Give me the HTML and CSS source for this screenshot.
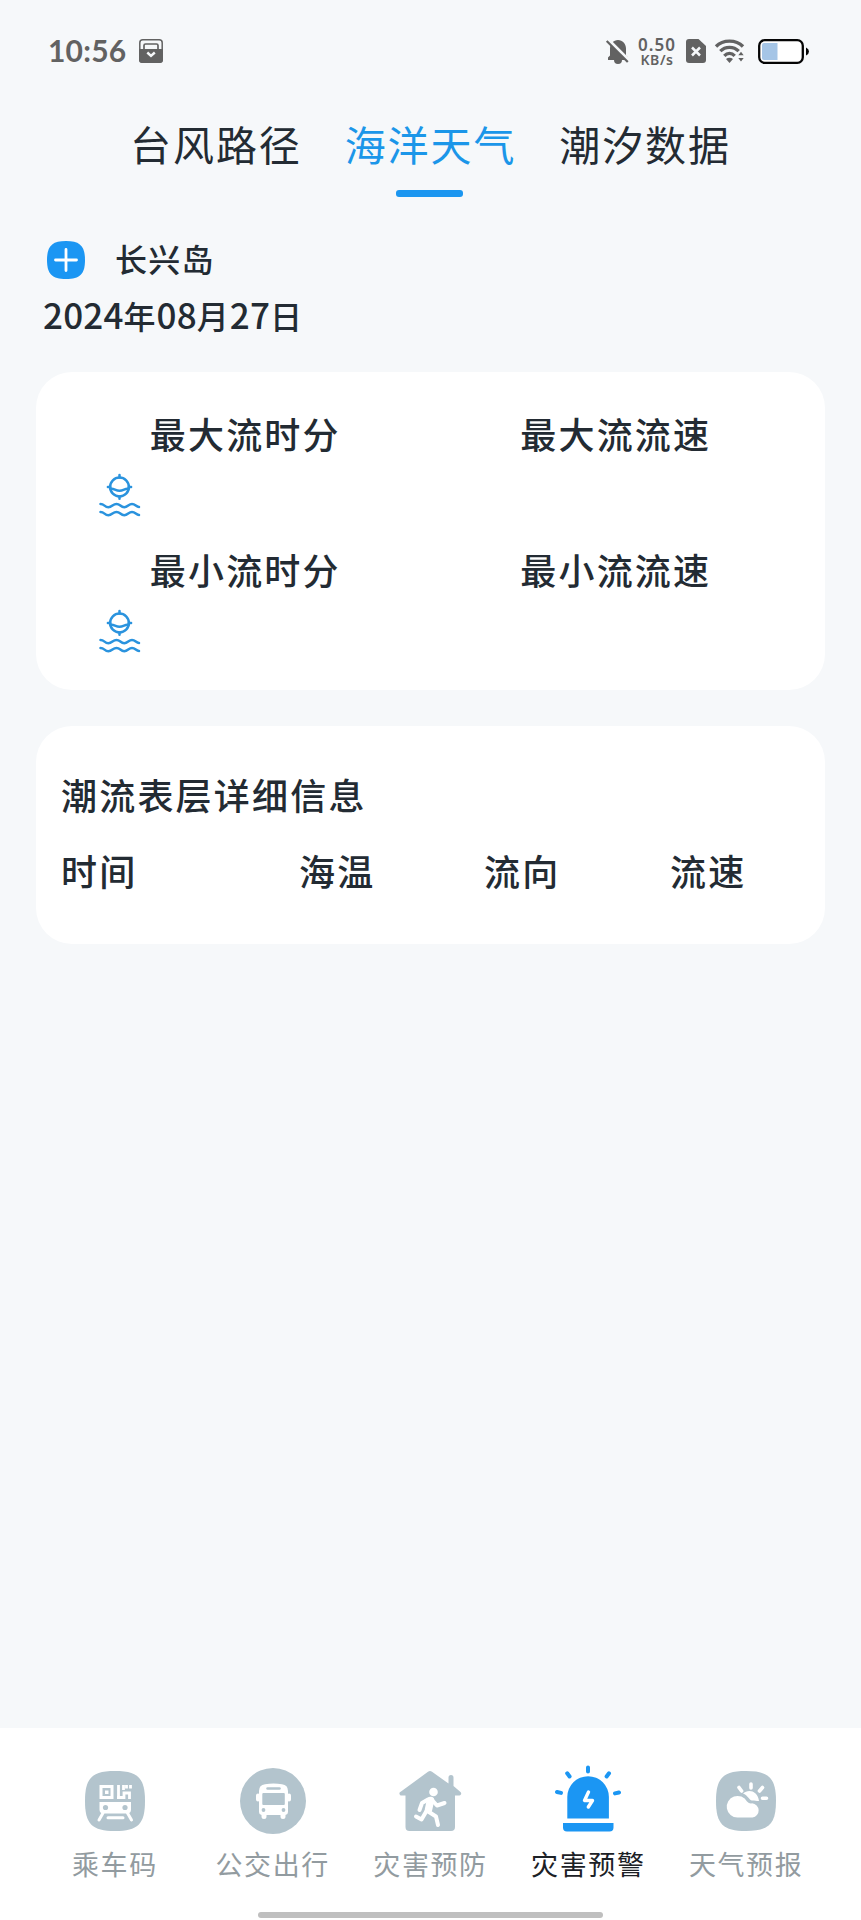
FILE: index.html
```html
<!DOCTYPE html>
<html lang="zh-CN">
<head>
<meta charset="utf-8">
<title>海洋天气</title>
<link rel="stylesheet" href="styles.css">
</head>
<body>
<svg width="0" height="0" class="defs">
  <symbol id="buoy" viewBox="0 0 42 44">
    <g fill="none" stroke="#2a93de" stroke-width="2.500" stroke-linecap="round">
      <circle cx="20.500" cy="14" r="9.400"/>
      <path d="M20.500 2v2.600M20.500 23.500v2.300M8.900 14h2.300M29.800 14h2.300M11.500 16c3-1 5 1.800 9 1.800s6-2.800 9-1.800"/>
      <path d="M1.500 31c4 0 4 3.200 7.800 3.200s4.500-3.200 8.200-3.200 4 3.200 7.700 3.200 4.300-3.200 7.800-3.200 4 3 7 3M1.500 39c4 0 4 3.200 7.800 3.200s4.500-3.200 8.200-3.200 4 3.200 7.700 3.200 4.300-3.200 7.800-3.200 4 3 7 3"/>
    </g>
  </symbol>
</svg>
<header class="status">
  <span class="clock">10:56</span>
  <svg class="wallet" width="24" height="24" viewBox="0 0 24 24">
    <rect x=".8" y=".8" width="22.400" height="22.400" rx="3" fill="none" stroke="#626262" stroke-width="1.500"/>
    <path d="M5 10V6.500a1.500 1.500 0 0 1 1.500-1.500h11a1.500 1.500 0 0 1 1.500 1.500V10" fill="none" stroke="#626262" stroke-width="1.700"/>
    <path d="M0 10h24v11a3 3 0 0 1-3 3H3a3 3 0 0 1-3-3z" fill="#626262"/>
    <path d="M8.300 13.500l3.700 3.400 3.800-3.400" fill="none" stroke="#f6f8fa" stroke-width="2.400"/>
  </svg>
  <div class="signals">
    <svg class="bell" width="24" height="26" viewBox="0 0 24 26">
      <path d="M2 22v-2.500l2-2V10.500c0-5 3.500-8 8-8.500 4.500.5 8 3.500 8 8.500v7l2 2V22zM8 22h8a4 4 0 0 1-8 0z" fill="#626262"/>
      <path d="M1.500 1L24 23.500" stroke="#f6f8fa" stroke-width="3.200"/>
      <path d="M.7 3L21.800 24" stroke="#626262" stroke-width="2.200"/>
    </svg>
    <div class="speed"><span class="rate">0.50</span><span class="unit">KB/s</span></div>
    <svg class="sim" width="20" height="24" viewBox="0 0 20 24">
      <path d="M3 0h9.500L20 7v14a3 3 0 0 1-3 3H3a3 3 0 0 1-3-3V3a3 3 0 0 1 3-3z" fill="#626262"/>
      <path d="M6 8.500l8 8M14 8.500l-8 8" stroke="#f6f8fa" stroke-width="2.500"/>
    </svg>
    <svg class="wifi" width="30" height="25" viewBox="0 0 30 25">
      <g fill="none" stroke="#626262" stroke-width="3.300">
        <path d="M1 7.500C8 .2 21 .2 28 7.500M5.300 12.200c5-5.200 13.400-5.200 18.400 0"/>
        <path d="M9.300 16.800c3-3.200 7.400-3.200 10.400 0"/>
      </g>
      <path d="M11 20c2-1.800 5-1.800 7 0l-3.500 4zM23.300 16.300l2.700-3.500 2.700 3.500zM23.300 19l2.700 3.500 2.700-3.500z" fill="#626262"/>
    </svg>
    <svg class="battery" width="52" height="25" viewBox="0 0 52 25">
      <rect x="1.200" y="1.200" width="43.600" height="22.600" rx="5.500" fill="#fff" stroke="#050505" stroke-width="2.300"/>
      <path d="M6 4h13.500v17H6a2 2 0 0 1-2-2V6a2 2 0 0 1 2-2z" fill="#a5c5e6"/>
      <path d="M48 8.500q3 1.300 3 4t-3 4z" fill="#050505"/>
    </svg>
  </div>
</header>

<nav class="tabs">
  <span class="tab">台风路径</span>
  <span class="tab tab-on">海洋天气</span>
  <span class="tab">潮汐数据</span>
</nav>

<section class="place">
  <div class="place-row">
    <svg width="38" height="38" viewBox="0 0 38 38">
      <path d="M19 0C33 0 38 5 38 19S33 38 19 38 0 33 0 19 5 0 19 0z" fill="#1b96f3"/>
      <path d="M19 8.500v21M8.500 19h21" stroke="#fff" stroke-width="2.800" stroke-linecap="round"/>
    </svg>
    <span class="place-name">长兴岛</span>
  </div>
  <div class="date"><span class="num">2024</span>年<span class="num">08</span>月<span class="num">27</span>日</div>
</section>

<main>
  <section class="card flow-card">
    <div class="flow-row"><span>最大流时分</span><span>最大流流速</span></div>
    <svg class="buoy" width="42" height="44"><use href="#buoy"/></svg>
    <div class="flow-row"><span>最小流时分</span><span>最小流流速</span></div>
    <svg class="buoy" width="42" height="44"><use href="#buoy"/></svg>
  </section>
  <section class="card detail-card">
    <h2 class="title">潮流表层详细信息</h2>
    <div class="head-row"><span>时间</span><span>海温</span><span>流向</span><span>流速</span></div>
  </section>
</main>

<footer class="dock">
  <div class="dock-items">
    <div class="item">
      <svg width="68" height="68" viewBox="0 0 68 68">
        <path d="M34 4C57 4 64 11 64 34S57 64 34 64 4 57 4 34 11 4 34 4z" fill="#b3c4cd"/>
        <rect x="20" y="19.500" width="11" height="11" fill="none" stroke="#fff" stroke-width="3"/>
        <rect x="24" y="23.500" width="3.500" height="3.500" fill="#fff"/>
        <path d="M37.500 18v14M36 30.500h7V26h5.500v6M42.500 18v5M49.500 18v3.500M45.500 18v3.500" fill="none" stroke="#fff" stroke-width="2.800"/>
        <path d="M18.500 35h31.500v7.500a4 4 0 0 1-4 4H22.500a4 4 0 0 1-4-4z" fill="#fff"/>
        <circle cx="24.500" cy="40.500" r="2.600" fill="#b3c4cd"/><circle cx="44" cy="40.500" r="2.600" fill="#b3c4cd"/>
        <path d="M22 46l-4 7M46.500 46l4 7M27 50.700h15" stroke="#fff" stroke-width="3" stroke-linecap="round"/>
      </svg>
      <span>乘车码</span>
    </div>
    <div class="item">
      <svg width="68" height="68" viewBox="0 0 68 68">
        <circle cx="34" cy="34" r="33" fill="#b3c4cd"/>
        <path d="M20 24q0-6 6-6.800 8.500-1.200 17 0 6 .8 6 6.800v21a3 3 0 0 1-2.500 3v1.500a2.500 2.500 0 0 1-5 0V48h-14v1.500a2.500 2.500 0 0 1-5 0V48a3 3 0 0 1-2.500-3z" fill="#fff"/>
        <path d="M19 28.500v4M50 28.500v4" stroke="#fff" stroke-width="4" stroke-linecap="round"/>
        <path d="M28.500 21.500h12" stroke="#b3c4cd" stroke-width="2.500" stroke-linecap="round"/>
        <rect x="23.300" y="26" width="22.500" height="12" rx="1" fill="#b3c4cd"/>
        <circle cx="24.500" cy="43" r="1.900" fill="#b3c4cd"/><circle cx="44.500" cy="43" r="1.900" fill="#b3c4cd"/>
      </svg>
      <span>公交出行</span>
    </div>
    <div class="item">
      <svg width="68" height="68" viewBox="0 0 68 68">
        <path d="M32 4.800q2-1.600 4 0l16.500 11.700V10.500a2.500 2.500 0 0 1 5 0V19l7 6a2 2 0 0 1-1 3.500H59V60a4 4 0 0 1-4 4H13.500a4 4 0 0 1-4-4V28.500H6A2 2 0 0 1 5 24.500z" fill="#b3c4cd"/>
        <circle cx="37.500" cy="25" r="4.300" fill="#fff"/>
        <path d="M34.500 33.500l-2 9" stroke="#fff" stroke-width="7.500" stroke-linecap="round"/>
        <path d="M32 32.500l-6 3.500-2.500 7M36 33l5 5.500 7.500-2.500M30.500 44l-5 8.500-5.500-3M33 45l7 4.500 2 8.500" fill="none" stroke="#fff" stroke-width="4" stroke-linecap="round" stroke-linejoin="round"/>
      </svg>
      <span>灾害预防</span>
    </div>
    <div class="item item-on">
      <svg width="68" height="68" viewBox="0 0 68 68">
        <path d="M13.300 51.500V30a20.800 20.800 0 0 1 41.600 0v21.500zM9 56h50.500v4.500a4 4 0 0 1-4 4H13a4 4 0 0 1-4-4z" fill="#1b96f3"/>
        <path d="M34 .5v4M13.200 6.300l2.400 3.200M55 6.300l-2.400 3.200M3 25l4 .9M65 25.500l-4 .9" stroke="#1b96f3" stroke-width="4" stroke-linecap="round"/>
        <path d="M34.500 25l-4 8.500h8L34.300 40" fill="none" stroke="#fff" stroke-width="3.400" stroke-linecap="round" stroke-linejoin="round"/>
      </svg>
      <span>灾害预警</span>
    </div>
    <div class="item">
      <svg width="68" height="68" viewBox="0 0 68 68">
        <path d="M34 4C57 4 64 11 64 34S57 64 34 64 4 57 4 34 11 4 34 4z" fill="#b3c4cd"/>
        <path d="M39 17v4M27 20.500l2.600 3.500M50.500 20.500l-3 3.500M50.500 31.300h4" stroke="#fff" stroke-width="3.600" stroke-linecap="round"/>
        <path d="M31 26.500c5-5 15-3 16 7.500-3 0-4-.5-7-.5-3-.5-4-5-9-7z" fill="#fff"/>
        <path d="M25.500 50.500a10.800 10.800 0 1 1 9.500-16q2.500 2.500 5 1.700a7.200 7.200 0 0 1 .5 14.300z" fill="#fff"/>
      </svg>
      <span>天气预报</span>
    </div>
  </div>
  <div class="home-bar"></div>
</footer>
</body>
</html>
```
FILE: styles.css
```css
* { box-sizing: border-box; margin: 0; padding: 0; }
body {
  height: 1920px;
  display: flex;
  flex-direction: column;
  background: #f6f8fa;
  color: #232b33;
  font-family: "Noto Sans CJK SC", sans-serif;
  overflow: hidden;
}
svg { display: block; flex: none; overflow: visible; }
.defs { position: absolute; }
.status { height: 102px; padding: 0 51px 0 48px; display: flex; align-items: center; color: #626262; }
.clock { width: 91px; font: 700 30px/38px Lato, sans-serif; padding-bottom: 2px; letter-spacing: 0.2px; white-space: nowrap; }
.signals { margin-left: auto; display: flex; align-items: center; }
.speed { width: 40px; margin: 0 9px 0 7px; display: flex; flex-direction: column; align-items: center; font-family: "Noto Sans", sans-serif; font-weight: 600; }
.rate { font-size: 17px; line-height: 17px; letter-spacing: 1px; }
.unit { font-size: 14px; line-height: 14px; letter-spacing: 0.6px; }
.wifi { margin-left: 9px; }
.battery { margin-left: 13px; }
.tabs { height: 108px; display: flex; justify-content: center; gap: 43px; }
.tab { display: flex; flex-direction: column; align-items: center; font-size: 41px; line-height: 82px; letter-spacing: 1.9px; white-space: nowrap; }
.tab-on { color: #1b96e9; }
.tab-on::after { content: ""; width: 67px; height: 7px; margin: 6px 2px 0 0; border-radius: 3px; background: #1b96f0; }
.place { height: 162px; padding: 31px 43px 0; }
.place-row { display: flex; align-items: center; height: 38px; gap: 30px; padding-left: 4px; }
.place-name { font-size: 32px; line-height: 34px; padding-bottom: 4px; letter-spacing: 1.3px; font-weight: 500; }
.date { margin-top: 15px; font-size: 32px; line-height: 40px; letter-spacing: 0.9px; font-weight: 500; white-space: nowrap; }
.num { font-size: 35px; letter-spacing: 0.2px; }
main { flex: 1; padding: 0 36px; display: flex; flex-direction: column; gap: 36px; }
.card { background: #fff; border-radius: 36px; font-size: 36px; letter-spacing: 2.2px; font-weight: 500; }
.flow-card { height: 318px; padding: 36px 24px 0 24px; }
.flow-row { display: grid; grid-template-columns: 1fr 1fr; text-align: center; line-height: 50px; }
.buoy { margin: 15px 0 27px 39px; }
.detail-card { height: 218px; padding: 43px 24px 0 25px; }
.title { font-size: inherit; font-weight: 500; line-height: 50px; }
.head-row { display: grid; grid-template-columns: 238px 185px 186px 1fr; margin-top: 26px; line-height: 50px; }
.dock { height: 192px; background: #fff; display: flex; flex-direction: column; align-items: center; justify-content: space-between; padding: 39px 36px 2px; }
.dock-items { width: 100%; display: grid; grid-template-columns: repeat(5, 1fr); }
.item { display: flex; flex-direction: column; align-items: center; font-size: 27px; line-height: 40px; letter-spacing: 1.6px; color: #929ba0; white-space: nowrap; }
.item span { margin-top: 9px; }
.item-on { color: #1c2126; }
.home-bar { width: 345px; height: 6px; border-radius: 3px; background: #bfbfbf; }
```
